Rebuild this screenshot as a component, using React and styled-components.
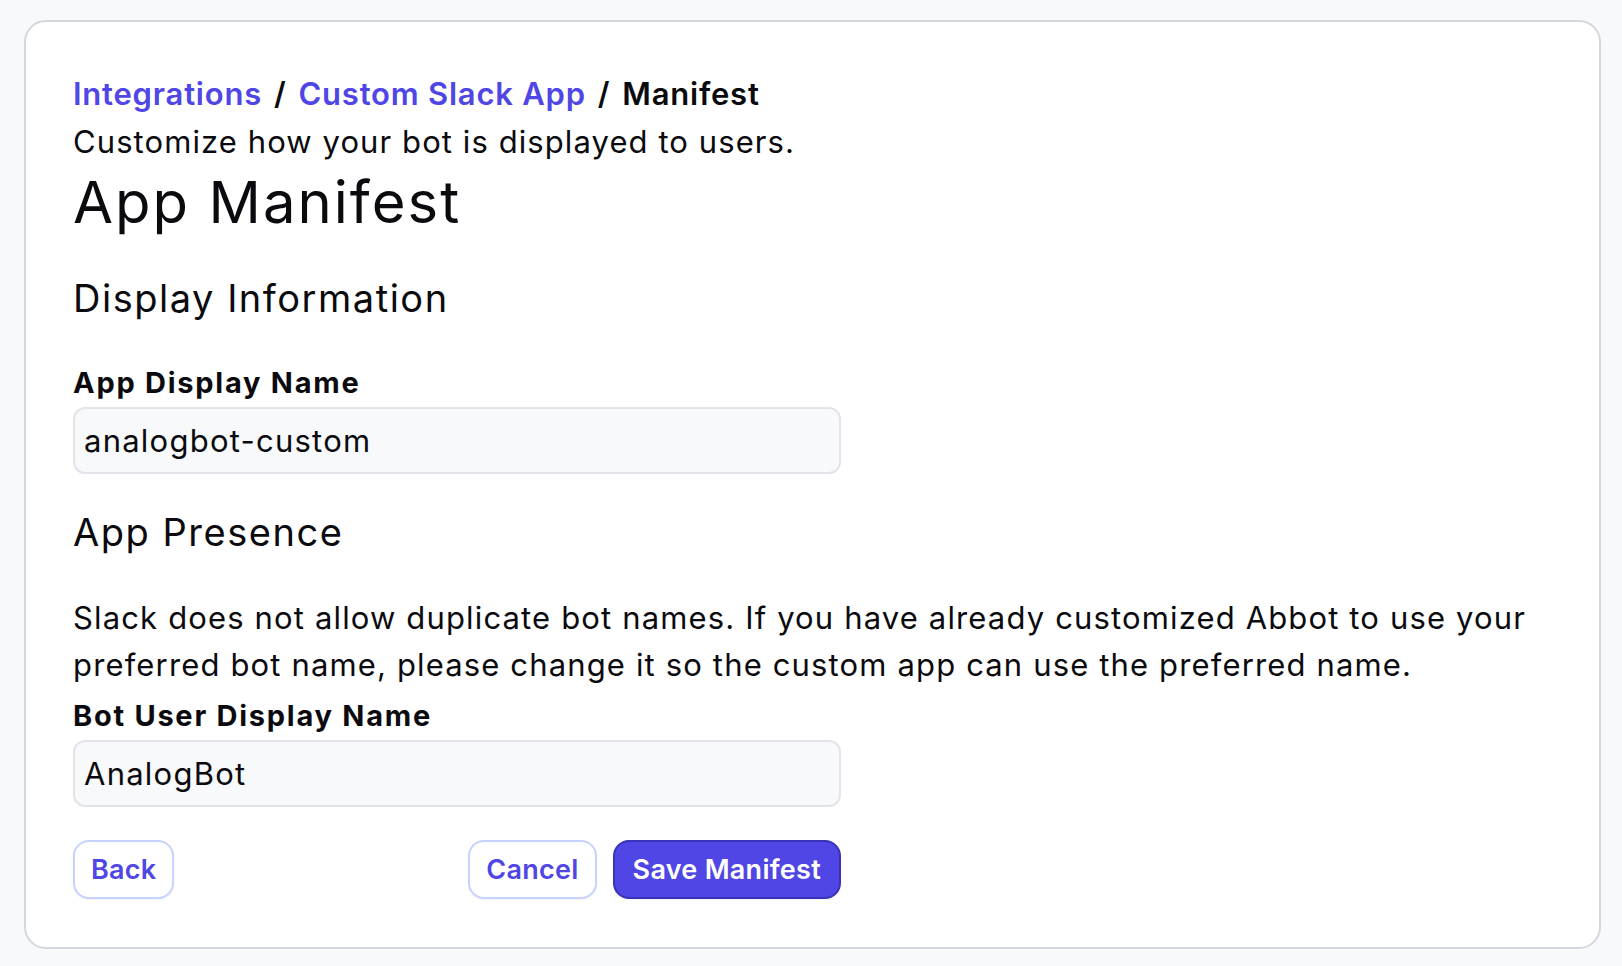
import React from 'react';
import styled, { createGlobalStyle } from 'styled-components';

const GlobalStyle = createGlobalStyle`
  html, body {
    margin: 0;
    padding: 0;
    background: #f8f9fb;
    font-family: Inter, 'Noto Sans', sans-serif;
    color: #0b0b0f;
  }
`;

const Page = styled.div`
  padding: 20px 21px 19px 24px;
`;

const Card = styled.div`
  background: #ffffff;
  border: 2px solid #d5d7de;
  border-radius: 22px;
  padding: 48px 47px 48px 47px;
`;

const Breadcrumb = styled.nav`
  font-size: 31px;
  font-weight: 600;
  line-height: 48px;
  letter-spacing: 0.025em;
`;

const Crumb = styled.a`
  color: #4f46e5;
  text-decoration: none;
`;

const Sep = styled.span`
  margin: 0 12px;
  color: #0b0b0f;
`;

const Current = styled.span`
  color: #0b0b0f;
`;

const Subtitle = styled.p`
  margin: 0;
  font-size: 31px;
  line-height: 48px;
  letter-spacing: 0.035em;
`;

const Title = styled.h1`
  margin: 0;
  font-size: 58px;
  font-weight: 400;
  line-height: 72px;
  letter-spacing: 0.035em;
`;

const SectionTitle = styled.h2`
  margin: ${(p) => p.$top}px 0 0;
  font-size: 38px;
  font-weight: 400;
  line-height: 48px;
  letter-spacing: 0.04em;
`;

const Form = styled.div`
  width: 768px;
`;

const Label = styled.label`
  display: block;
  margin-top: ${(p) => p.$top}px;
  font-size: 29px;
  font-weight: 700;
  line-height: 40px;
  letter-spacing: 0.06em;
`;

const Input = styled.input`
  display: block;
  box-sizing: border-box;
  width: 768px;
  height: 67px;
  margin-top: 4px;
  padding: 0 9px;
  background: #f8f9fb;
  border: 2px solid #e3e4e9;
  border-radius: 12px;
  font-family: Inter, 'Noto Sans', sans-serif;
  font-size: 31px;
  letter-spacing: 0.04em;
  color: #0b0b0f;
  outline: none;
`;

const Help = styled.p`
  margin: 38px 0 0;
  font-size: 31px;
  line-height: 47.3px;
  letter-spacing: 0.037em;
`;

const Actions = styled.div`
  display: flex;
  justify-content: space-between;
  margin-top: 33px;
`;

const Group = styled.div`
  display: flex;
  gap: 16px;
`;

const Button = styled.button`
  box-sizing: border-box;
  height: 59px;
  padding: 0 ${(p) => (p.$primary ? 18 : 16)}px;
  border-radius: 16px;
  border: 2px solid ${(p) => (p.$primary ? '#3a32b8' : '#c7d2fe')};
  background: ${(p) => (p.$primary ? '#4f46e5' : '#ffffff')};
  color: ${(p) => (p.$primary ? '#ffffff' : '#4f46e5')};
  font-family: Inter, 'Noto Sans', sans-serif;
  font-size: 27px;
  font-weight: 600;
  letter-spacing: 0.01em;
  box-shadow: 0 1px 2px rgba(0, 0, 0, 0.06);
  cursor: pointer;
`;

export default function App() {
  return (
    <Page>
      <GlobalStyle />
      <Card>
        <Breadcrumb>
          <Crumb href="#">Integrations</Crumb>
          <Sep>/</Sep>
          <Crumb href="#">Custom Slack App</Crumb>
          <Sep>/</Sep>
          <Current>Manifest</Current>
        </Breadcrumb>
        <Subtitle>Customize how your bot is displayed to users.</Subtitle>
        <Title>App Manifest</Title>

        <SectionTitle $top={36}>Display Information</SectionTitle>
        <Form>
          <Label $top={41}>App Display Name</Label>
          <Input defaultValue="analogbot-custom" />
        </Form>

        <SectionTitle $top={34}>App Presence</SectionTitle>
        <Help>
          Slack does not allow duplicate bot names. If you have already customized Abbot to use your
          preferred bot name, please change it so the custom app can use the preferred name.
        </Help>
        <Form>
          <Label $top={7}>Bot User Display Name</Label>
          <Input defaultValue="AnalogBot" />
          <Actions>
            <Button>Back</Button>
            <Group>
              <Button>Cancel</Button>
              <Button $primary>Save Manifest</Button>
            </Group>
          </Actions>
        </Form>
      </Card>
    </Page>
  );
}
